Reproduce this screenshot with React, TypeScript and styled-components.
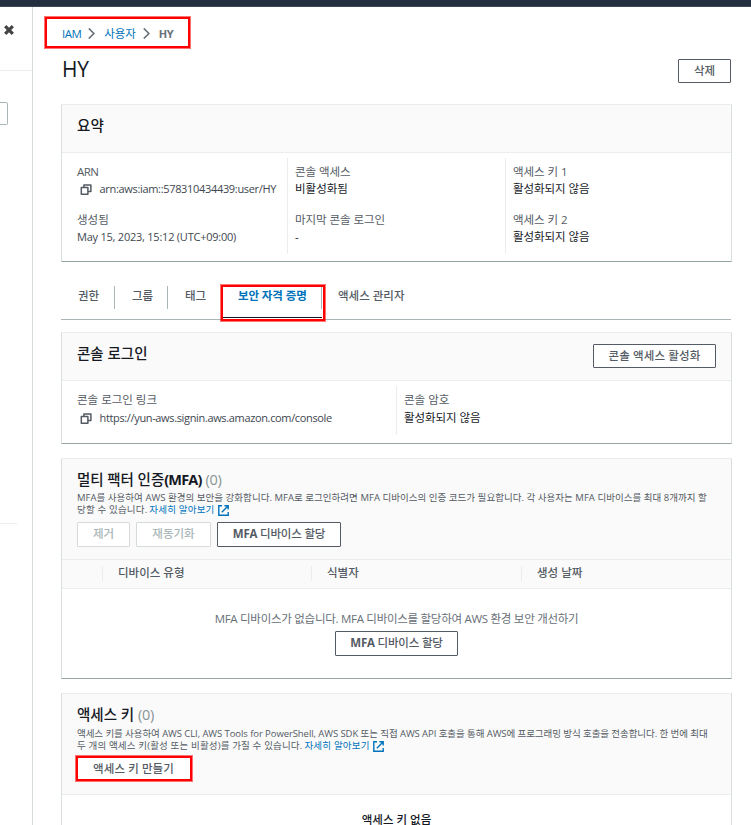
import React from "react";
import styled, { createGlobalStyle, css } from "styled-components";

const Global = createGlobalStyle`
  * { box-sizing: border-box; }
  html, body { margin: 0; height: 825px; overflow: hidden; background: #fff; }
  body { font-family: "Open Sans", "Noto Sans CJK KR", sans-serif; font-size: 11.5px; color: #16191f; }
`;

const TopBar = styled.div`
  height: 7px;
  background: #232f3e;
  border-bottom: 1px solid #3d4756;
`;
const Layout = styled.div`
  display: grid;
  grid-template-columns: 33px 1fr;
  height: 818px;
  overflow: hidden;
`;
const Side = styled.aside`
  border-right: 1px solid #d5dbdb;
`;
const SideHead = styled.div`
  height: 64px;
  padding: 18px 0 0 4px;
  border-bottom: 1px solid #eaeded;
  svg { display: block; }
`;
const SideSearch = styled.div`
  width: 8px;
  height: 23px;
  margin-top: 31px;
  border: 1px solid #aab7b8;
  border-left: 0;
  border-radius: 0 2px 2px 0;
`;
const SideRule = styled.div`
  width: 17px;
  margin-top: 398px;
  border-top: 1px solid #eaeded;
`;
const Main = styled.main`
  padding: 16px 19px 0 28px;
  min-width: 0;
`;

const Txt = styled.span<{ $ls?: number }>`
  white-space: nowrap;
  letter-spacing: ${p => p.$ls ?? 0}px;
`;

/* Red marker drawn on top of the content it surrounds */
const Marker = styled.div<{ $t: number; $l: number; $w: number; $h: number }>`
  position: absolute;
  top: ${p => p.$t}px;
  left: ${p => p.$l}px;
  width: ${p => p.$w}px;
  height: ${p => p.$h}px;
  border: 1px solid rgba(255, 0, 0, 0.55);
  box-shadow: inset 0 0 0 2px #ff0000;
  pointer-events: none;
`;

const Crumbs = styled.nav`
  position: relative;
  display: flex;
  align-items: center;
  height: 20px;
  padding-left: 1px;
  color: #0073bb;
  svg { display: block; margin: 1px 9px 0 7px; }
`;
const Current = styled(Txt)`
  font-size: 11px;
  font-weight: 700;
  color: #687078;
`;
const TitleRow = styled.div`
  display: flex;
  justify-content: space-between;
  height: 24px;
  margin: 16px 1px 21px 0;
`;
const PageTitle = styled.h1`
  margin: 0 0 0 1px;
  font-size: 21px;
  font-weight: 400;
  line-height: 20px;
  letter-spacing: -0.3px;
`;

const Btn = styled.button<{ $w: number; $h?: number; $off?: boolean; $ls?: number; $bare?: boolean }>`
  display: flex;
  align-items: center;
  justify-content: center;
  width: ${p => p.$w}px;
  height: ${p => p.$h ?? 25}px;
  padding: 0 0 3px;
  font-family: inherit;
  font-size: 11.5px;
  font-weight: 500;
  letter-spacing: ${p => p.$ls ?? 0}px;
  white-space: pre;
  color: ${p => (p.$off ? "#aab7b8" : "#545b64")};
  background: #fff;
  border: 1px solid ${p => (p.$bare ? "#fff" : p.$off ? "#d5dbdb" : "#545b64")};
  border-radius: 1px;
  b { font-weight: 700; }
`;

const Card = styled.section<{ $h: number; $gap?: number }>`
  height: ${p => p.$h}px;
  margin-top: ${p => p.$gap ?? 0}px;
  border: 1px solid #d9dfdf;
  border-top-color: #eaeded;
  border-bottom-color: #95a5a6;
  border-radius: 1px;
  background: #fff;
`;
const CardHead = styled.header<{ $h: number }>`
  position: relative;
  height: ${p => p.$h}px;
  padding: 11px 15px 0;
  background: #fafafa;
  border-bottom: 1px solid #eaeded;
`;
const HeadRow = styled.div`
  display: flex;
  justify-content: space-between;
`;
const CardTitle = styled.h2<{ $ls?: number }>`
  margin: 0;
  font-size: 14.5px;
  font-weight: 500;
  line-height: 20px;
  white-space: pre;
  letter-spacing: ${p => p.$ls ?? 0}px;
  b { font-weight: 700; letter-spacing: -0.8px; }
  i { font-style: normal; font-weight: 400; color: #879596; letter-spacing: -0.2px; }
`;
const Desc = styled.p<{ $gap: number }>`
  margin: ${p => p.$gap}px 0 0;
  font-size: 9.5px;
  line-height: 12px;
  color: #545b64;
`;
const Line = styled.span`
  display: flex;
  align-items: center;
  height: 12px;
  svg { margin-left: 3px; flex: none; }
`;
const Link = styled(Txt)`
  color: #0073bb;
  margin-left: 2px;
`;
const Actions = styled.div`
  display: flex;
  gap: 6px;
  margin-top: 6px;
`;

const Columns = styled.div<{ $cols: string; $h: number }>`
  display: grid;
  grid-template-columns: ${p => p.$cols};
  grid-template-rows: ${p => p.$h}px;
  height: ${p => p.$h}px;
  margin-top: 5px;
`;
const Column = styled.div<{ $first?: boolean }>`
  padding: 5px 0 0 ${p => (p.$first ? 15 : 7)}px;
  border-left: ${p => (p.$first ? 0 : 1)}px solid #eaeded;
`;
const Field = styled.div`
  height: 48px;
`;
const Label = styled.div<{ $ls?: number }>`
  height: 17px;
  line-height: 17px;
  color: #545b64;
  white-space: nowrap;
  letter-spacing: ${p => p.$ls ?? 0}px;
`;
const Value = styled.div<{ $ls?: number; $latin?: boolean; $drop?: boolean }>`
  display: flex;
  align-items: center;
  height: 17px;
  margin-top: ${p => (p.$drop ? 1 : 0)}px;
  line-height: 17px;
  white-space: nowrap;
  letter-spacing: ${p => p.$ls ?? 0}px;
  ${p => p.$latin && css`color: #414750; font-size: 11px;`}
  svg { margin: 2px 7.5px 0 3px; flex: none; }
`;

const Tabs = styled.div`
  position: relative;
  display: grid;
  grid-template-columns: 54px 53px 54px 100px 1fr;
  height: 58px;
  padding-top: 24px;
  margin: 0 1px 12px 0;
  border-bottom: 1px solid #aab7b8;
`;
const Tab = styled.div<{ $on?: boolean; $last?: boolean; $ls?: number }>`
  position: relative;
  height: 23px;
  padding-left: ${p => (p.$on || p.$last ? 16 : 17)}px;
  line-height: 20px;
  white-space: nowrap;
  font-weight: ${p => (p.$on ? 700 : 500)};
  letter-spacing: ${p => p.$ls ?? 0}px;
  color: ${p => (p.$on ? "#0073bb" : "#545b64")};
  border-right: ${p => (p.$last ? 0 : 1)}px solid #aab7b8;
  ${p => p.$on && css`
    &::after { content: ""; position: absolute; left: 1px; right: -1px; top: 31px; height: 1px; background: #16191f; }
  `}
`;

const TableHead = styled.div`
  display: grid;
  grid-template-columns: 40px 209px 210px 1fr;
  align-items: start;
  height: 29px;
  padding-top: 6px;
  background: #fafafa;
  border-bottom: 1px solid #eaeded;
`;
const Th = styled.div<{ $blank?: boolean }>`
  height: 15px;
  line-height: 13px;
  padding-left: 15px;
  font-weight: 500;
  color: #545b64;
  border-left: ${p => (p.$blank ? 0 : 1)}px solid #eaeded;
`;
const Empty = styled.div`
  display: flex;
  flex-direction: column;
  align-items: center;
  padding-top: 21px;
  color: #687078;
  line-height: 18px;
  button { margin-top: 3px; }
`;
const EmptyKeys = styled.div`
  padding-top: 16px;
  text-align: center;
  line-height: 18px;
  font-weight: 500;
`;

const Chevron = () => (
  <svg width="7" height="11" viewBox="0 0 7 11" fill="none" stroke="#687078" strokeWidth="1.7">
    <path d="M0.8 0.5 L5.9 5.5 L0.8 10.5" />
  </svg>
);
const Copy = () => (
  <svg width="12" height="11" viewBox="0 0 12 11" fill="none" stroke="#545b64" strokeWidth="1.5" strokeLinejoin="round">
    <path d="M1.3 3.6H7.9V10.2H1.3Z" />
    <path d="M3.9 3.4V0.9H10.9V7.6H8" />
  </svg>
);
const External = () => (
  <svg width="11" height="11" viewBox="0 0 11 11" fill="none" stroke="#0073bb" strokeWidth="1.4">
    <path d="M4 0.8H0.8V10.2H10.2V7" />
    <path d="M6.4 0.8H10.2V4.6M10 1L3.8 7.2" />
  </svg>
);
const Close = () => (
  <svg width="10" height="10" viewBox="0 0 10 10" stroke="#444" strokeWidth="3.2">
    <path d="M1.2 1.2L8.8 8.8M8.8 1.2L1.2 8.8" />
  </svg>
);

export default function App() {
  return (
    <>
      <Global />
      <TopBar />
      <Layout>
        <Side>
          <SideHead><Close /></SideHead>
          <SideSearch />
          <SideRule />
        </Side>
        <Main>
          <Crumbs>
            <Txt $ls={-0.5}>IAM</Txt>
            <Chevron />
            <Txt $ls={-0.1}>사용자</Txt>
            <Chevron />
            <Current $ls={-0.4}>HY</Current>
            <Marker $t={-7} $l={-17} $w={147} $h={33} />
          </Crumbs>
          <TitleRow>
            <PageTitle>HY</PageTitle>
            <Btn $w={53} $h={24}>삭제</Btn>
          </TitleRow>

          <Card $h={158}>
            <CardHead $h={48}><CardTitle $ls={0.2}>요약</CardTitle></CardHead>
            <Columns $cols="225px 218px 1fr" $h={96}>
              <Column $first>
                <Field>
                  <Label $ls={-0.5}>ARN</Label>
                  <Value $latin $ls={-0.32}><Copy />arn:aws:iam::578310434439:user/HY</Value>
                </Field>
                <Field>
                  <Label>생성됨</Label>
                  <Value $latin $ls={-0.23}>May 15, 2023, 15:12 (UTC+09:00)</Value>
                </Field>
              </Column>
              <Column>
                <Field><Label $ls={-0.05}>콘솔 액세스</Label><Value>비활성화됨</Value></Field>
                <Field><Label $ls={-0.06}>마지막 콘솔 로그인</Label><Value>-</Value></Field>
              </Column>
              <Column>
                <Field><Label $ls={-0.05}>액세스 키 1</Label><Value $ls={-0.05}>활성화되지 않음</Value></Field>
                <Field><Label $ls={-0.05}>액세스 키 2</Label><Value $ls={-0.05}>활성화되지 않음</Value></Field>
              </Column>
            </Columns>
          </Card>

          <Tabs>
            <Tab>권한</Tab>
            <Tab>그룹</Tab>
            <Tab>태그</Tab>
            <Tab $on $ls={-0.1}>보안 자격 증명</Tab>
            <Tab $last>액세스 관리자</Tab>
            <Marker $t={22} $l={159} $w={106} $h={38} />
          </Tabs>

          <Card $h={112}>
            <CardHead $h={48}>
              <HeadRow>
                <CardTitle>콘솔 로그인</CardTitle>
                <Btn $w={123} $h={24} $ls={0.15}>콘솔 액세스 활성화</Btn>
              </HeadRow>
            </CardHead>
            <Columns $cols="334px 1fr" $h={49}>
              <Column $first>
                <Label>콘솔 로그인 링크</Label>
                <Value $latin $drop $ls={-0.35}><Copy />https://yun-aws.signin.aws.amazon.com/console</Value>
              </Column>
              <Column><Label>콘솔 암호</Label><Value $drop $ls={-0.05}>활성화되지 않음</Value></Column>
            </Columns>
          </Card>

          <Card $h={221} $gap={14}>
            <CardHead $h={101}>
              <CardTitle $ls={-0.05}>멀티 팩터 인증<b>(MFA)</b> <i>(0)</i></CardTitle>
              <Desc $gap={2}>
                <Line><Txt $ls={0.03}>MFA를 사용하여 AWS 환경의 보안을 강화합니다. MFA로 로그인하려면 MFA 디바이스의 인증 코드가 필요합니다. 각 사용자는 MFA 디바이스를 최대 8개까지 할</Txt></Line>
                <Line><Txt $ls={0.17}>당할 수 있습니다.</Txt><Link $ls={0.2}>자세히 알아보기</Link><External /></Line>
              </Desc>
              <Actions>
                <Btn $w={53} $off>제거</Btn>
                <Btn $w={75} $off>재동기화</Btn>
                <Btn $w={124} $ls={-0.2}><b>MFA</b> 디바이스 할당</Btn>
              </Actions>
            </CardHead>
            <TableHead>
              <Th $blank />
              <Th>디바이스 유형</Th>
              <Th>식별자</Th>
              <Th>생성 날짜</Th>
            </TableHead>
            <Empty>
              <Txt $ls={-0.28}>MFA 디바이스가 없습니다. MFA 디바이스를 할당하여 AWS 환경 보안 개선하기</Txt>
              <Btn $w={123} $ls={-0.2}><b>MFA</b> 디바이스 할당</Btn>
            </Empty>
          </Card>

          <Card $h={200} $gap={14}>
            <CardHead $h={101}>
              <CardTitle>액세스 키 <i>(0)</i></CardTitle>
              <Desc $gap={3}>
                <Line><Txt $ls={-0.077}>액세스 키를 사용하여 AWS CLI, AWS Tools for PowerShell, AWS SDK 또는 직접 AWS API 호출을 통해 AWS에 프로그래밍 방식 호출을 전송합니다. 한 번에 최대</Txt></Line>
                <Line><Txt $ls={0.16}>두 개의 액세스 키(활성 또는 비활성)를 가질 수 있습니다.</Txt><Link $ls={0.2}>자세히 알아보기</Link><External /></Line>
              </Desc>
              <Actions>
                <Btn $w={113} $h={23} $ls={0.1} $bare>액세스 키 만들기</Btn>
              </Actions>
              <Marker $t={61} $l={13} $w={118} $h={27} />
            </CardHead>
            <EmptyKeys>액세스 키 없음</EmptyKeys>
          </Card>
        </Main>
      </Layout>
    </>
  );
}
